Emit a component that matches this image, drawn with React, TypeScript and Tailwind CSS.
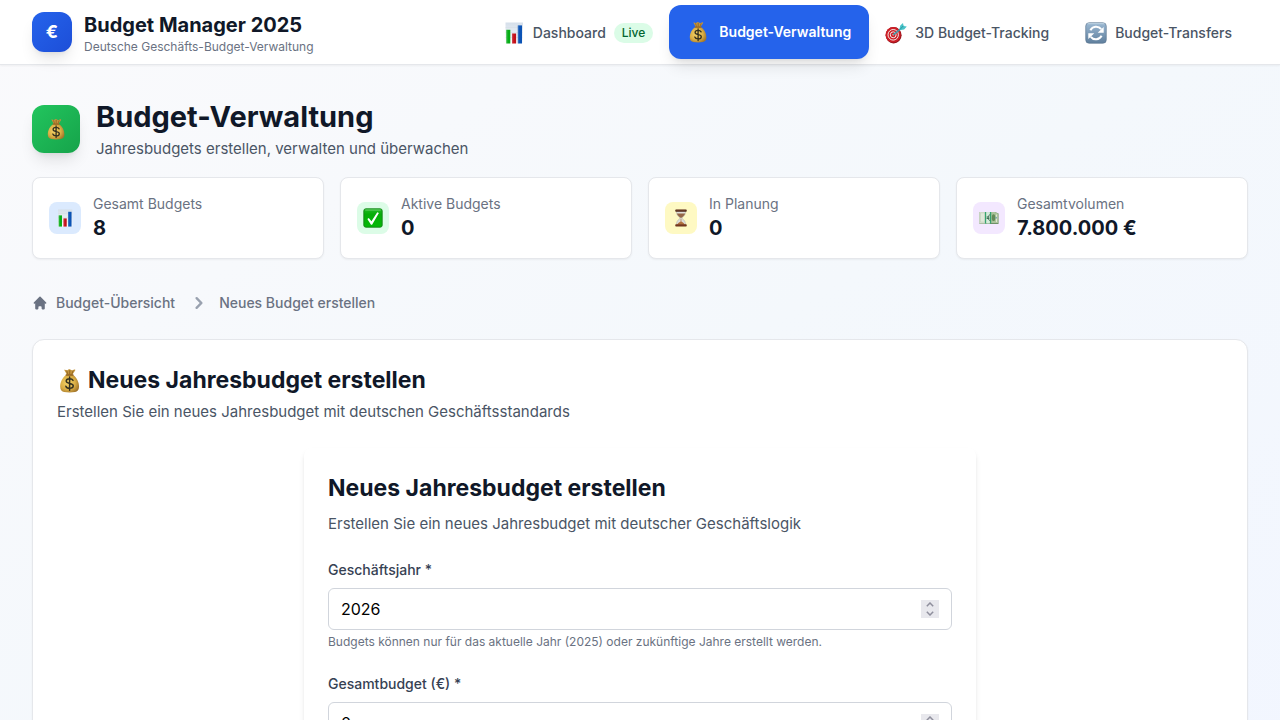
import { useId, useState } from "react";
import type { ReactNode } from "react";

type IconProps = { className?: string };

function ChartIcon({ className }: IconProps) {
  const id = useId();
  return (
    <svg viewBox="0 0 22 22" className={className} aria-hidden="true">
      <defs>
        <linearGradient id={id} x1="0" y1="0" x2="0" y2="1">
          <stop offset="0" stopColor="#d5dfea" />
          <stop offset="1" stopColor="#fafbfc" />
        </linearGradient>
      </defs>
      <rect x="2.5" y="0.5" width="17.500" height="21" fill={`url(#${id})`} />
      <path d="M2.5 5.5h17M2.5 10.5h17M2.5 15.5h17" stroke="#cfd7e0" strokeWidth="0.4" />
      <rect x="3.3" y="7.8" width="4" height="13.7" fill="#06ad16" />
      <rect x="9.1" y="11.5" width="4" height="10" fill="#c4101a" />
      <rect x="14.8" y="3.4" width="4.2" height="18.1" fill="#0b53b5" />
      <path d="M4 8v13.5M9.8 11.7v9.8M15.6 3.6v17.9" stroke="#fff" strokeOpacity="0.25" strokeWidth="0.7" />
    </svg>
  );
}

function MoneyBagIcon({ className }: IconProps) {
  const id = useId();
  return (
    <svg viewBox="0 0 22 22" className={className} aria-hidden="true">
      <defs>
        <radialGradient id={id} cx="0.4" cy="0.45" r="0.65">
          <stop offset="0" stopColor="#f5d568" />
          <stop offset="0.6" stopColor="#daae45" />
          <stop offset="1" stopColor="#a2752a" />
        </radialGradient>
      </defs>
      <path d="M6.3 1.6c1.3-.4 1.9.7 2.8.3.9-.5 1.5-1.2 2.3-.7.8.5 1.6 1.2 2.5.7.8-.5 1.6-.9 2.3-.2-.8 1.6-2 2.8-2.7 4.6H8.7C8.2 4.600 7 3 6.300 1.600Z" fill="#c4943c" />
      <path d="M8.500 2.300l1.100 3.500M11.200 1.900V5.800M14.200 2.300l-1.300 3.500" stroke="#7a531b" strokeWidth="0.6" />
      <path d="M8.300 6h5.600c3.400 2.200 5.600 6.600 5.500 10.600-.1 3-1.500 4.200-3.500 4.500-3 .5-6.600.5-9.600 0-2-.3-3.400-1.500-3.500-4.500C2.700 12.600 4.900 8.200 8.300 6Z" fill={`url(#${id})`} />
      <path d="M8.200 6.100h5.800" stroke="#946423" strokeWidth="1.300" strokeLinecap="round" />
      <path d="M14.100 10.900c-.5-1-1.600-1.500-3-1.500-1.700 0-3 .8-3 2.100 0 3 6.200 1.200 6.200 4.200 0 1.400-1.300 2.200-3.200 2.200-1.600 0-2.900-.7-3.300-1.900M11.100 7.900v11.600" fill="none" stroke="#34301f" strokeWidth="1.300" strokeLinecap="round" />
    </svg>
  );
}

function TargetIcon({ className }: IconProps) {
  return (
    <svg viewBox="0 0 22 22" className={className} aria-hidden="true">
      <ellipse cx="8.600" cy="13.300" rx="8" ry="8.200" fill="#8f1219" />
      <ellipse cx="8.200" cy="12.800" rx="7.600" ry="7.800" fill="#cc1f27" />
      <ellipse cx="8.200" cy="12.800" rx="5.200" ry="5.300" fill="none" stroke="#f5e8e6" strokeWidth="1" />
      <ellipse cx="8.200" cy="12.800" rx="2.900" ry="3" fill="none" stroke="#f5e8e6" strokeWidth="1" />
      <circle cx="8.200" cy="12.800" r="0.800" fill="#f5e8e6" />
      <path d="M8.400 12.600l8-6.200" stroke="#3f9bab" strokeWidth="1.600" />
      <path d="M14.400 7.600l.9-4.200 2.700-2.300.5 2.800 3.300.6-2.700 2.900-3.500.6Z" fill="#48c3c8" />
      <path d="M15 7.400l3.500-3.700" stroke="#22818f" strokeWidth="0.7" />
    </svg>
  );
}

function RefreshIcon({ className }: IconProps) {
  const id = useId();
  return (
    <svg viewBox="0 0 22 22" className={className} aria-hidden="true">
      <defs>
        <linearGradient id={id} x1="0" y1="0" x2="0" y2="1">
          <stop offset="0" stopColor="#9cb9d3" />
          <stop offset="1" stopColor="#5f7f9d" />
        </linearGradient>
      </defs>
      <rect x="0.700" y="0.700" width="20.600" height="20.600" rx="3.500" fill={`url(#${id})`} stroke="#56718b" strokeWidth="0.600" />
      <path d="M3 1.700h16" stroke="#d3e2ee" strokeWidth="0.700" strokeLinecap="round" />
      <path d="M5.400 8.200A6.400 6.400 0 0 1 16.200 7.200M16.600 13.800A6.400 6.400 0 0 1 5.800 14.800" fill="none" stroke="#fff" strokeWidth="2" />
      <path d="M18.700 5v5.700h-6ZM3.300 17v-5.700h6Z" fill="#fff" />
    </svg>
  );
}

function CheckIcon({ className }: IconProps) {
  const id = useId();
  return (
    <svg viewBox="0 0 22 22" className={className} aria-hidden="true">
      <defs>
        <linearGradient id={id} x1="0" y1="0" x2="0" y2="1">
          <stop offset="0" stopColor="#21ba24" />
          <stop offset="0.300" stopColor="#06ad08" />
          <stop offset="1" stopColor="#03b907" />
        </linearGradient>
      </defs>
      <rect x="0.900" y="0.900" width="20.200" height="20.200" rx="2.200" fill={`url(#${id})`} stroke="#148518" strokeWidth="1" />
      <path d="M2.500 2.200h17" stroke="#9de39d" strokeWidth="0.700" />
      <path d="M4.800 12.100l1.600-1.200 2.900 3.700 6.400-10 1.800.8-7.500 12.900H8.800Z" fill="#fff" />
    </svg>
  );
}

function HourglassIcon({ className }: IconProps) {
  return (
    <svg viewBox="0 0 22 22" className={className} aria-hidden="true">
      <path d="M5.500 2.500h11c.2 4.300-1.200 5.800-4.300 8.200v.8c3.100 2.300 4.500 4 4.300 8.300h-11c-.2-4.300 1.200-6 4.300-8.300v-.8C6.700 8.300 5.300 6.800 5.500 2.500Z" fill="#deded9" stroke="#999994" strokeWidth="0.500" />
      <path d="M6 5.600h10c-.5 2.400-2.300 3.600-4.300 5.200h-1.400C8.300 9.200 6.500 8 6 5.600Z" fill="#956746" />
      <path d="M10.600 12h.8v3.300c2.100 1.200 3.800 2.400 4.500 4.200H6.100c.7-1.800 2.400-3 4.500-4.200Z" fill="#b1713e" />
      <rect x="4" y="0.700" width="14" height="2.700" rx="0.900" fill="#512a1b" />
      <rect x="4" y="18.700" width="14" height="2.800" rx="0.900" fill="#6d321b" />
      <path d="M5 19.300h11.500M5 1.300h11.500" stroke="#a76644" strokeWidth="0.500" />
    </svg>
  );
}

function BanknotesIcon({ className }: IconProps) {
  return (
    <svg viewBox="0 0 22 22" className={className} aria-hidden="true">
      <path d="M.5 4.500h17.200L21.500 6v11.600H.5Z" fill="#6f9168" />
      <path d="M.5 4.500h17l3.700 1.700v10.400H.5Z" fill="#a9c29a" />
      <path d="M.5 4.500h7v12.600h-7Z" fill="#e0e8da" />
      <path d="M1.500 5.300h5v10.300h-5Z" fill="none" stroke="#b6c5ad" strokeWidth="0.600" />
      <path d="M6.500 4.500h1.500v12.600H6.500ZM11.900 4.500h1.500v12.600h-1.500Z" fill="#34a371" />
      <path d="M8 4.500h3.900v12.600H8Z" fill="#d4ecdc" />
      <path d="M12.200 7.500c-2.700.1-3.200 5.700.2 6.400M8.400 9.900h3M8.400 11.500h3" fill="none" stroke="#36634b" strokeWidth="1" />
      <ellipse cx="16" cy="10.700" rx="1.900" ry="3.700" fill="#648957" />
      <path d="M19.200 7.200v8.300" stroke="#e7edda" strokeWidth="1" />
      <circle cx="18.700" cy="10.700" r="1.100" fill="#79a7a4" />
    </svg>
  );
}

function HomeIcon({ className }: IconProps) {
  return (
    <svg viewBox="0 0 20 20" fill="currentColor" className={className} aria-hidden="true">
      <path d="M10.707 2.293a1 1 0 00-1.414 0l-7 7a1 1 0 001.414 1.414L4 10.414V17a1 1 0 001 1h2a1 1 0 001-1v-2a1 1 0 011-1h2a1 1 0 011 1v2a1 1 0 001 1h2a1 1 0 001-1v-6.586l.293.293a1 1 0 001.414-1.414l-7-7z" />
    </svg>
  );
}

function ChevronIcon({ className }: IconProps) {
  return (
    <svg viewBox="0 0 20 20" fill="currentColor" className={className} aria-hidden="true">
      <path fillRule="evenodd" clipRule="evenodd" d="M7.293 14.707a1 1 0 010-1.414L10.586 10 7.293 6.707a1 1 0 011.414-1.414l4 4a1 1 0 010 1.414l-4 4a1 1 0 01-1.414 0z" />
    </svg>
  );
}

function NavLink({ icon, label, badge }: { icon: ReactNode; label: string; badge?: string }) {
  return (
    <a href="#" className="flex items-center gap-2 rounded-xl px-4 py-3 text-sm font-medium whitespace-nowrap text-gray-600 hover:bg-gray-100">
      {icon}
      {label}
      {badge && <span className="rounded-full bg-green-100 px-2 py-0.5 text-xs text-green-800">{badge}</span>}
    </a>
  );
}

function StatCard({ icon, tint, label, value }: { icon: ReactNode; tint: string; label: string; value: string }) {
  return (
    <div className="flex items-center gap-3 rounded-lg border border-gray-200 bg-white p-4 shadow-xs">
      <div className={`flex size-8 items-center justify-center rounded-lg ${tint}`}>{icon}</div>
      <div>
        <p className="text-sm text-gray-500">{label}</p>
        <p className="text-xl font-bold text-gray-900">{value}</p>
      </div>
    </div>
  );
}

function NumberField({ id, label, initial, hint }: { id: string; label: string; initial: number; hint?: string }) {
  const [value, setValue] = useState(initial);
  return (
    <div>
      <label htmlFor={id} className="mb-2 block text-sm font-medium text-gray-700">{label}</label>
      <div className="flex items-center rounded-md border border-gray-300 bg-white px-3 py-2 focus-within:border-blue-500">
        <input
          id={id}
          type="number"
          value={value}
          onChange={(e) => setValue(Number(e.target.value))}
          className="h-6 min-w-0 flex-1 text-base text-black outline-none [appearance:textfield] [&::-webkit-inner-spin-button]:appearance-none"
        />
        <div className="flex size-[18px] flex-col bg-[#e8e8ed] text-[#8f8f9d]">
          <button type="button" aria-label={`${label} erhöhen`} className="flex h-[9px] items-center justify-center" onClick={() => setValue(value + 1)}>
            <svg viewBox="0 0 8 5" className="h-[5px] w-2" fill="none" stroke="currentColor" strokeWidth="1.500"><path d="M.8 4.200 4 1l3.200 3.200" /></svg>
          </button>
          <button type="button" aria-label={`${label} verringern`} className="flex h-[9px] items-center justify-center" onClick={() => setValue(value - 1)}>
            <svg viewBox="0 0 8 5" className="h-[5px] w-2" fill="none" stroke="currentColor" strokeWidth="1.500"><path d="M.8.800 4 4 7.200.800" /></svg>
          </button>
        </div>
      </div>
      {hint && <p className="mt-1 text-xs text-gray-500">{hint}</p>}
    </div>
  );
}

export default function App() {
  return (
    <div className="min-h-screen bg-linear-to-br from-[#fafafc] via-[#f4f8fc] to-[#f2f6ff] font-['Inter','Liberation_Sans',sans-serif]">
      <header className="relative border-b border-gray-200 bg-white shadow-xs">
        <div className="flex h-16 items-center justify-between px-8">
          <div className="flex items-center gap-3">
            <div className="flex size-10 items-center justify-center rounded-xl bg-linear-to-br from-[#2563eb] to-[#1d4ed8] text-lg font-bold text-white shadow-lg">€</div>
            <div className="pt-0.5">
              <p className="text-xl font-bold text-gray-900">Budget Manager 2025</p>
              <p className="text-xs text-gray-500">Deutsche Geschäfts-Budget-Verwaltung</p>
            </div>
          </div>
          <nav className="flex items-center gap-1 pt-0.5">
            <NavLink icon={<ChartIcon className="size-[22px]" />} label="Dashboard" badge="Live" />
            <a href="#" aria-current="page" className="-mx-1 -mt-0.5 flex h-[54px] items-center gap-2.5 rounded-xl bg-[#2563eb] px-[18px] text-sm font-semibold whitespace-nowrap text-white shadow-lg">
              <MoneyBagIcon className="size-[22px]" />
              Budget-Verwaltung
            </a>
            <NavLink icon={<TargetIcon className="size-[22px]" />} label="3D Budget-Tracking" />
            <NavLink icon={<RefreshIcon className="size-[22px]" />} label="Budget-Transfers" />
          </nav>
        </div>
      </header>

      <main className="px-8 py-8">
        <div className="mb-4 flex items-center gap-4">
          <div className="flex size-12 items-center justify-center rounded-xl bg-linear-to-br from-[#22c55e] to-[#16a34a] shadow-lg">
            <MoneyBagIcon className="size-[22px]" />
          </div>
          <div>
            <h1 className="text-[29px] leading-10 font-bold text-gray-900">Budget-Verwaltung</h1>
            <p className="text-[15px] leading-6 text-gray-600">Jahresbudgets erstellen, verwalten und überwachen</p>
          </div>
        </div>

        <div className="mb-8 grid grid-cols-4 gap-4">
          <StatCard icon={<ChartIcon className="size-[18px]" />} tint="bg-[#dbeafe]" label="Gesamt Budgets" value="8" />
          <StatCard icon={<CheckIcon className="size-5" />} tint="bg-[#dcfce7]" label="Aktive Budgets" value="0" />
          <StatCard icon={<HourglassIcon className="size-[18px]" />} tint="bg-[#fef9c3]" label="In Planung" value="0" />
          <StatCard icon={<BanknotesIcon className="size-5" />} tint="bg-[#f3e8ff]" label="Gesamtvolumen" value="7.800.000 €" />
        </div>

        <nav aria-label="Breadcrumb" className="mb-6 flex items-center text-sm font-medium text-gray-500">
          <a href="#" className="flex items-center gap-2 hover:text-gray-700">
            <HomeIcon className="size-4" />
            Budget-Übersicht
          </a>
          <ChevronIcon className="mr-2 ml-3 size-6 text-gray-400" />
          <span>Neues Budget erstellen</span>
        </nav>

        <section className="rounded-xl border border-gray-200 bg-white p-6 shadow-xs">
          <h2 className="flex items-center gap-1.5 text-[23px] leading-8 font-bold text-gray-900">
            <MoneyBagIcon className="size-[25px]" />
            Neues Jahresbudget erstellen
          </h2>
          <p className="mt-1 mb-6 text-[15px] leading-6 text-gray-600">Erstellen Sie ein neues Jahresbudget mit deutschen Geschäftsstandards</p>

          <form className="mx-auto max-w-2xl rounded-lg bg-white p-6 shadow-md">
            <h2 className="mb-2 text-[23px] leading-8 font-bold text-gray-900">Neues Jahresbudget erstellen</h2>
            <p className="mb-6 text-[15px] leading-6 text-gray-600">Erstellen Sie ein neues Jahresbudget mit deutscher Geschäftslogik</p>
            <div className="flex flex-col gap-6">
              <NumberField id="jahr" label="Geschäftsjahr *" initial={2026} hint="Budgets können nur für das aktuelle Jahr (2025) oder zukünftige Jahre erstellt werden." />
              <NumberField id="budget" label="Gesamtbudget (€) *" initial={0} />
            </div>
          </form>
        </section>
      </main>
    </div>
  );
}
